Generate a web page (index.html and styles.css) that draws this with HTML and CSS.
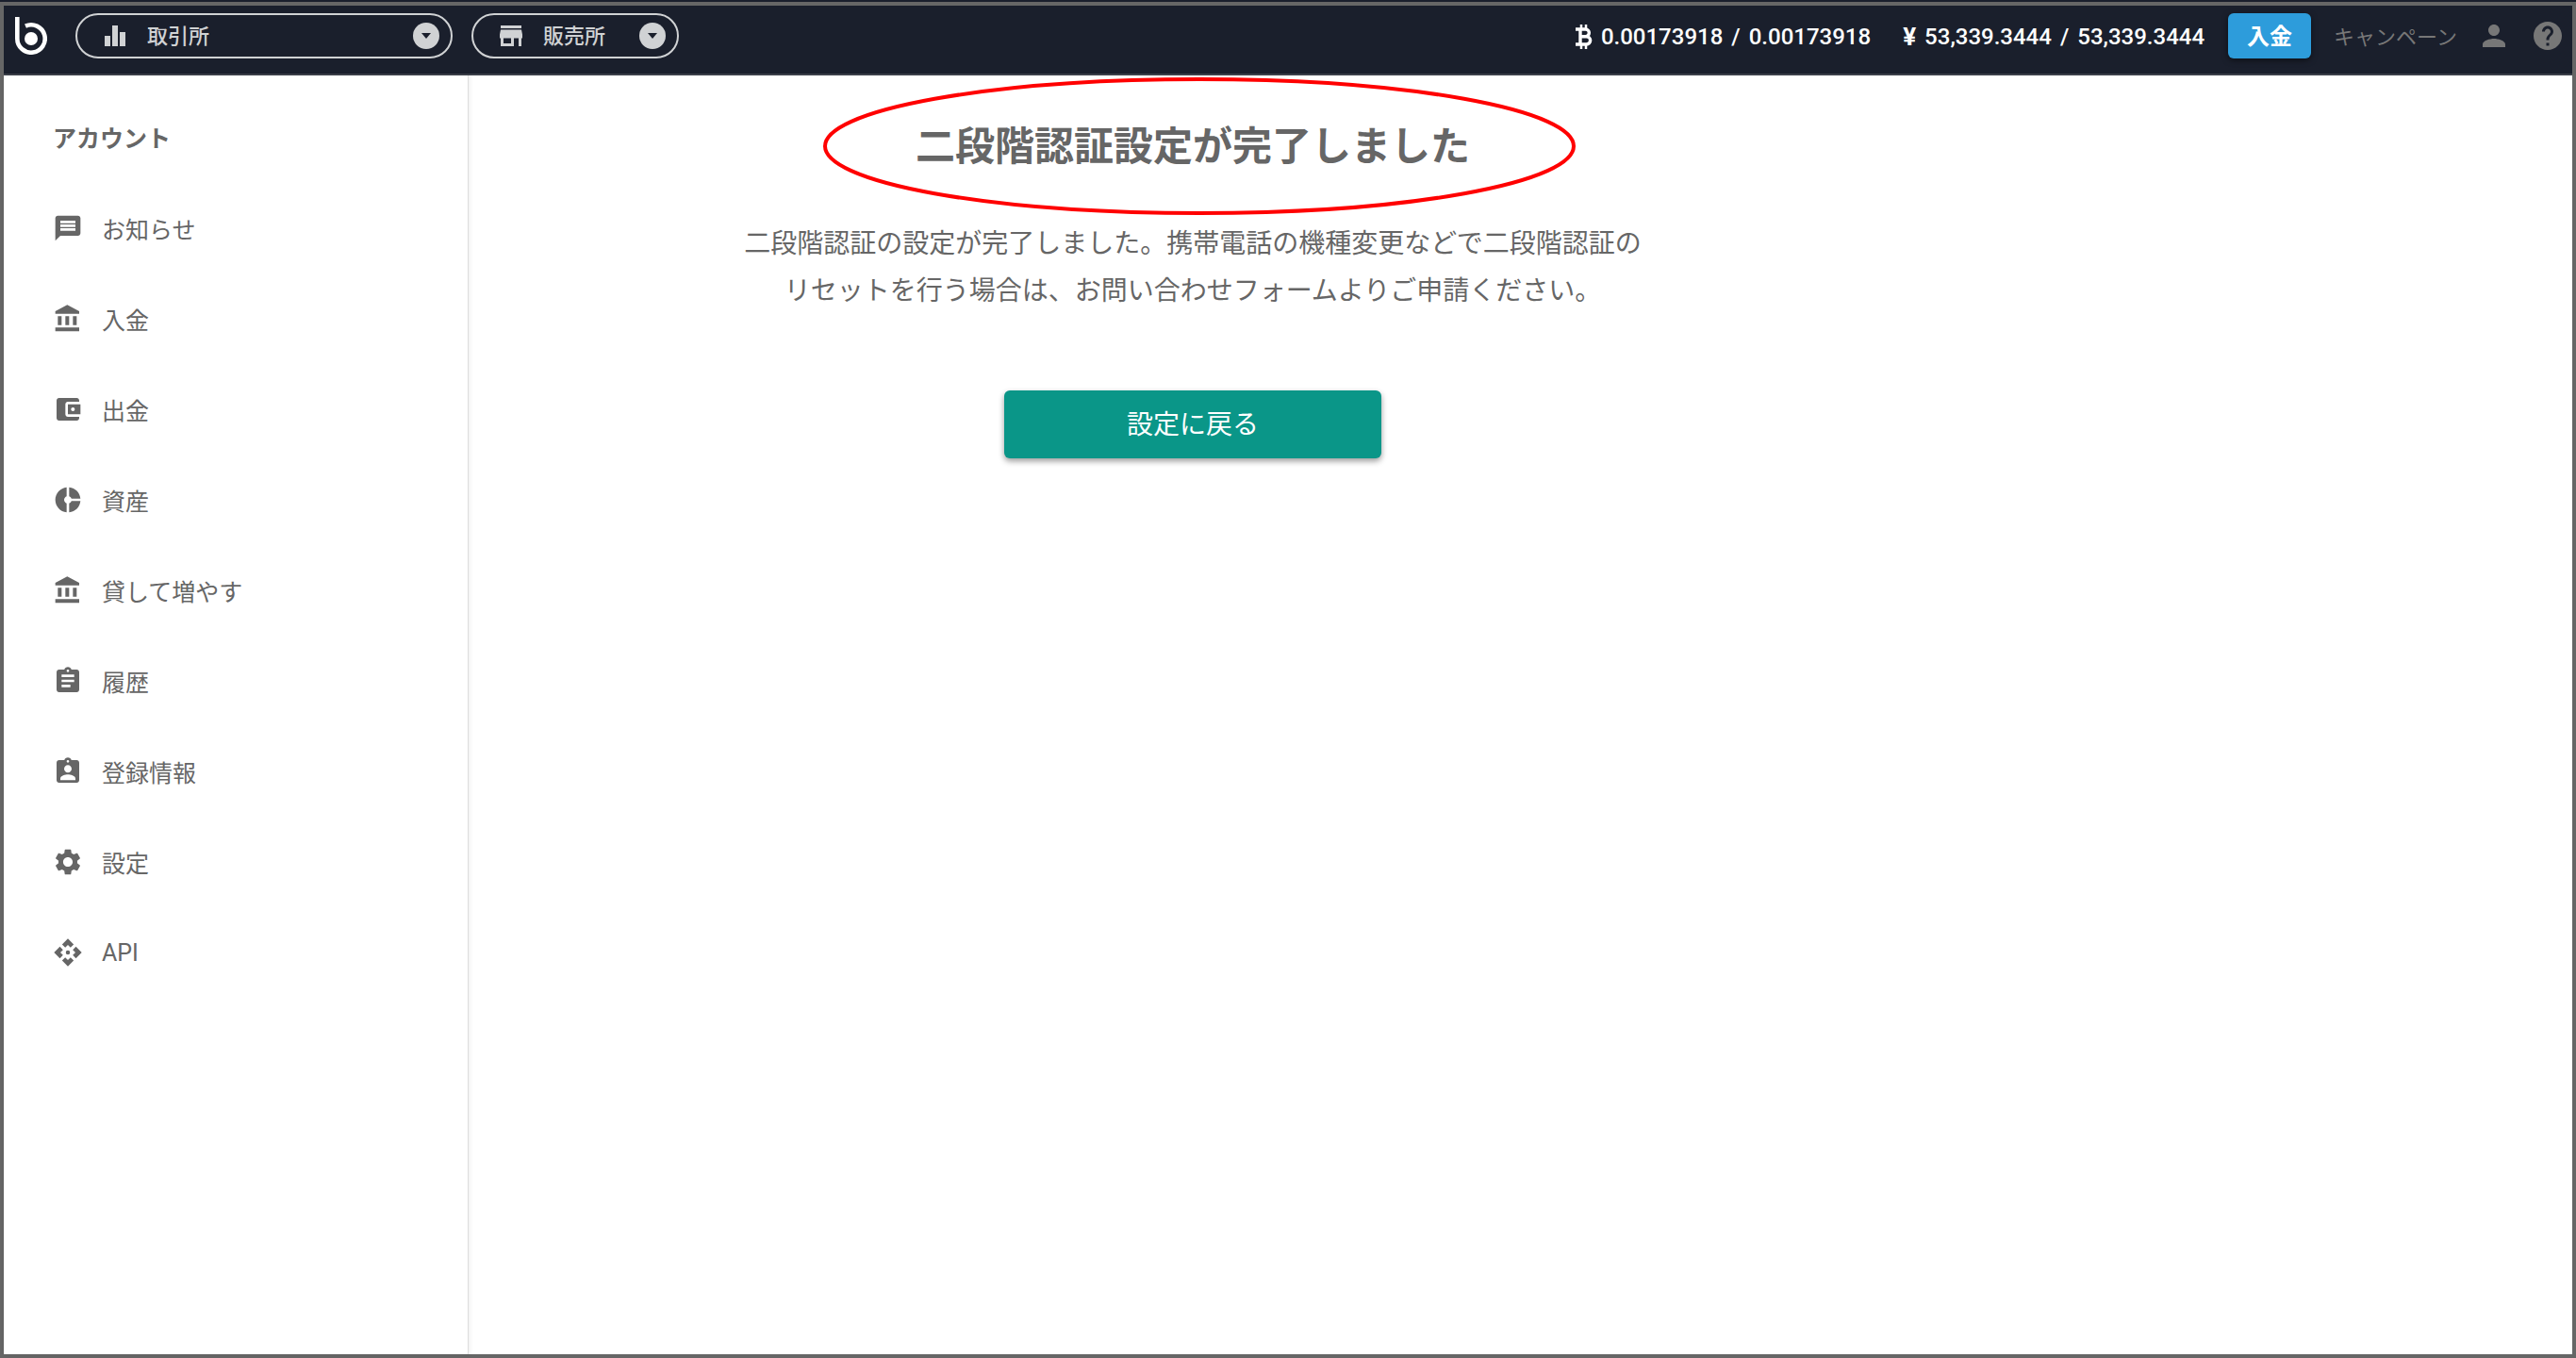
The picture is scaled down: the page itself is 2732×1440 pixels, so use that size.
FILE: index.html
```
<!DOCTYPE html>
<html lang="ja">
<head>
    <meta charset="UTF-8">
    <meta name="viewport" content="width=device-width, initial-scale=1.0">
    <title>二段階認証設定</title>
    <link rel="stylesheet" href="styles.css">
</head>
<body>
    <div class="window">
        <header class="header">
            <a href="#" class="logo" aria-label="ホーム">
                <svg viewBox="0 0 34 40" width="34" height="40" fill="none">
                    <path d="M2.3 0V23A14.7 14.7 0 1 0 11 9.6" stroke="#fff" stroke-width="4.6"/>
                    <circle cx="17" cy="23" r="7" fill="#fff"/>
                </svg>
            </a>
            <label class="pill pill-wide">
                <svg class="pill-icon" viewBox="0 0 24 24"><path d="M1 12h6v11H1zM9 1h6v22H9zM17 8h6v15h-6z"/></svg>
                <select aria-label="取引所">
                    <option>取引所</option>
                </select>
                <svg class="pill-arrow" viewBox="0 0 28 28"><circle cx="14" cy="14" r="14"/><path d="M9 11h10l-5 6z" fill="#1a1f2c"/></svg>
            </label>
            <label class="pill">
                <svg class="pill-icon" viewBox="0 0 24 24"><path d="M1 1h22v3H1zM1 5.500h22l1 5v4h-1V23h-3v-8.500h-5V23H1v-8.500H0v-4zM4 14.500V20h8v-5.500z" fill-rule="evenodd"/></svg>
                <select aria-label="販売所">
                    <option>販売所</option>
                </select>
                <svg class="pill-arrow" viewBox="0 0 28 28"><circle cx="14" cy="14" r="14"/><path d="M9 11h10l-5 6z" fill="#1a1f2c"/></svg>
            </label>

            <div class="balances">
                <div class="balance">
                    <svg viewBox="0 0 18 26" width="18" height="26" fill="none" stroke="#fff">
                        <path d="M6 0v5M11 0v5M6 21v5M11 21v5" stroke-width="2.500"/>
                        <path d="M0 5H10.500a3.700 3.700 0 0 1 0 7.700H5M10.500 12.700H11.500a4.100 4.100 0 0 1 0 8.300H0M5 5V21" stroke-width="3.400"/>
                    </svg>
                    <span>0.00173918</span><span>/</span><span>0.00173918</span>
                </div>
                <div class="balance">
                    <span class="yen">¥</span>
                    <span>53,339.3444</span><span>/</span><span>53,339.3444</span>
                </div>
            </div>
            <button class="deposit">入金</button>
            <nav class="header-links">
                <a href="#" class="campaign">キャンペーン</a>
                <a href="#" aria-label="アカウント">
                    <svg class="link-icon" viewBox="0 0 24 24"><path d="M12 12c2.210 0 4-1.790 4-4s-1.790-4-4-4-4 1.790-4 4 1.790 4 4 4zm0 2c-2.670 0-8 1.340-8 4v2h16v-2c0-2.660-5.330-4-8-4z"/></svg>
                </a>
                <a href="#" aria-label="ヘルプ">
                    <svg class="link-icon" viewBox="0 0 24 24"><path d="M12 2C6.480 2 2 6.480 2 12s4.480 10 10 10 10-4.480 10-10S17.520 2 12 2zm1 17h-2v-2h2v2zm2.070-7.750l-.9.920C13.450 12.900 13 13.500 13 15h-2v-.5c0-1.100.45-2.100 1.170-2.830l1.240-1.260c.37-.36.59-.86.59-1.410 0-1.100-.9-2-2-2s-2 .9-2 2H8c0-2.210 1.790-4 4-4s4 1.790 4 4c0 .88-.36 1.680-.93 2.250z"/></svg>
                </a>
            </nav>
        </header>

        <div class="page">
            <aside class="sidebar">
                <h2>アカウント</h2>
                <nav>
                    <a href="#">
                        <svg viewBox="0 0 24 24"><path d="M20 2H4c-1.100 0-1.990.9-1.990 2L2 22l4-4h14c1.100 0 2-.9 2-2V4c0-1.100-.9-2-2-2zM6 9h12v2H6V9zm12 5H6v-2h12v2zm0-6H6V6h12v2z"/></svg>
                        お知らせ
                    </a>
                    <a href="#">
                        <svg viewBox="0 0 24 24"><path d="M4 10v7h3v-7H4zm6 0v7h3v-7h-3zM2 22h19v-3H2v3zm14-12v7h3v-7h-3zm-4.500-9L2 6v2h19V6l-9.500-5z"/></svg>
                        入金
                    </a>
                    <a href="#">
                        <svg viewBox="0 0 24 24"><path d="M21 18v1c0 1.100-.9 2-2 2H5c-1.110 0-2-.9-2-2V5c0-1.100.89-2 2-2h14c1.100 0 2 .9 2 2v1h-9c-1.110 0-2 .9-2 2v8c0 1.100.89 2 2 2h9zm-9-2h10V8H12v8zm4-2.500c-.83 0-1.500-.67-1.500-1.500s.67-1.500 1.500-1.500 1.500.67 1.500 1.500-.67 1.500-1.500 1.500z"/></svg>
                        出金
                    </a>
                    <a href="#">
                        <svg viewBox="0 0 24 24"><path d="M11 9.160V2c-5 .5-9 4.790-9 10s4 9.500 9 10v-7.160c-1-.41-2-1.520-2-2.840s1-2.430 2-2.840zM14.860 11H22c-.48-4.750-4-8.530-9-9v7.160c1 .3 1.520.98 1.860 1.840zM13 14.840V22c5-.47 8.520-4.250 9-9h-7.140c-.34.860-.86 1.540-1.860 1.840z"/></svg>
                        資産
                    </a>
                    <a href="#">
                        <svg viewBox="0 0 24 24"><path d="M4 10v7h3v-7H4zm6 0v7h3v-7h-3zM2 22h19v-3H2v3zm14-12v7h3v-7h-3zm-4.500-9L2 6v2h19V6l-9.500-5z"/></svg>
                        貸して増やす
                    </a>
                    <a href="#">
                        <svg viewBox="0 0 24 24"><path d="M19 3h-4.180C14.400 1.840 13.300 1 12 1c-1.300 0-2.400.84-2.820 2H5c-1.100 0-2 .9-2 2v14c0 1.100.9 2 2 2h14c1.100 0 2-.9 2-2V5c0-1.100-.9-2-2-2zm-7 0c.55 0 1 .45 1 1s-.45 1-1 1-1-.45-1-1 .45-1 1-1zm2 14H7v-2h7v2zm3-4H7v-2h10v2zm0-4H7V7h10v2z"/></svg>
                        履歴
                    </a>
                    <a href="#">
                        <svg viewBox="0 0 24 24"><path d="M19 3h-4.180C14.400 1.840 13.300 1 12 1c-1.300 0-2.400.84-2.820 2H5c-1.100 0-2 .9-2 2v14c0 1.100.9 2 2 2h14c1.100 0 2-.9 2-2V5c0-1.100-.9-2-2-2zm-7 0c.55 0 1 .45 1 1s-.45 1-1 1-1-.45-1-1 .45-1 1-1zm0 4c1.660 0 3 1.340 3 3s-1.340 3-3 3-3-1.340-3-3 1.340-3 3-3zm6 12H6v-1.400c0-2 4-3.100 6-3.100s6 1.100 6 3.100V19z"/></svg>
                        登録情報
                    </a>
                    <a href="#">
                        <svg viewBox="0 0 24 24"><path d="M19.430 12.980c.04-.32.07-.64.07-.98s-.03-.66-.07-.98l2.110-1.650c.19-.15.24-.42.12-.64l-2-3.460c-.12-.22-.39-.3-.61-.22l-2.490 1c-.52-.4-1.080-.73-1.690-.98l-.38-2.650C14.460 2.180 14.250 2 14 2h-4c-.25 0-.46.18-.49.42l-.38 2.650c-.61.25-1.170.59-1.690.98l-2.490-1c-.23-.09-.49 0-.61.22l-2 3.460c-.13.22-.07.49.12.64l2.110 1.650c-.04.32-.07.65-.07.98s.03.66.07.98l-2.110 1.650c-.19.15-.24.42-.12.64l2 3.460c.12.22.39.3.61.22l2.490-1c.52.4 1.080.73 1.690.98l.38 2.650c.03.24.24.42.49.42h4c.25 0 .46-.18.49-.42l.38-2.650c.61-.25 1.170-.59 1.690-.98l2.490 1c.23.09.49 0 .61-.22l2-3.460c.12-.22.07-.49-.12-.64l-2.110-1.650zM12 15.800c-2.100 0-3.800-1.700-3.800-3.800s1.700-3.800 3.800-3.800 3.800 1.700 3.800 3.800-1.700 3.800-3.800 3.800z"/></svg>
                        設定
                    </a>
                    <a href="#">
                        <svg viewBox="0 0 24 24"><circle cx="12" cy="12" r="1.700"/><path d="M12 6l2.120 2.120 2.500-2.500L12 1 7.380 5.620l2.500 2.500zM6 12l2.120-2.120-2.500-2.500L1 12l4.620 4.620 2.500-2.500zM18 12l-2.120 2.120 2.500 2.500L23 12l-4.620-4.620-2.500 2.500zM12 18l-2.120-2.120-2.500 2.500L12 23l4.620-4.620-2.500-2.500z"/></svg>
                        API
                    </a>
                </nav>
            </aside>

            <main class="main">
                <div class="content">
                    <h1>
                        二段階認証設定が完了しました
                        <svg class="ellipse" viewBox="0 0 800 148"><ellipse cx="400" cy="74" rx="397" ry="71"/></svg>
                    </h1>
                    <p>二段階認証の設定が完了しました。携帯電話の機種変更などで二段階認証の<br>リセットを行う場合は、お問い合わせフォームよりご申請ください。</p>
                    <button class="back">設定に戻る</button>
                </div>
            </main>
        </div>
    </div>
</body>
</html>
```
FILE: styles.css
```
* {
    box-sizing: border-box;
}

body {
    margin: 0;
    padding-top: 2px;
    min-height: 100vh;
    display: flex;
    background-color: #1a1f2c;
    color: #666;
    font-family: Roboto, 'Noto Sans CJK JP', sans-serif;
}

a {
    color: inherit;
    text-decoration: none;
}

button {
    border: none;
    padding: 0 0 4px;
    color: #fff;
    font-family: inherit;
    cursor: pointer;
}

svg {
    display: block;
    flex-shrink: 0;
}

.window {
    flex: 1;
    display: flex;
    flex-direction: column;
    border: 4px solid #666;
    background-color: #fff;
}

/* Header */
.header {
    display: flex;
    align-items: center;
    padding: 8px 8px 16px 12px;
    background-color: #1a1f2c;
    border-bottom: 2px solid #3b3f49;
}

.logo {
    margin-right: 30px;
}

.pill {
    display: flex;
    align-items: center;
    width: 220px;
    height: 48px;
    margin-right: 20px;
    padding: 0 12px 0 28px;
    border: 2px solid #d0d2d4;
    border-radius: 24px;
}

.pill-wide {
    width: 400px;
}

.pill select {
    flex: 1;
    min-width: 0;
    margin-left: 22px;
    padding: 0;
    appearance: none;
    border: none;
    background: none;
    color: #d0d2d4;
    font-family: inherit;
    font-size: 22px;
    font-weight: 500;
}

.pill-icon {
    width: 24px;
    height: 24px;
    fill: #d0d2d4;
}

.pill-arrow {
    width: 28px;
    height: 28px;
    fill: #d0d2d4;
}

.balances {
    display: flex;
    gap: 34px;
    margin-left: auto;
    margin-right: 25px;
}

.balance {
    display: flex;
    align-items: center;
    gap: 9px;
    padding-top: 2px;
    color: #fff;
    font-size: 24px;
    font-weight: 500;
}

.yen {
    font-size: 26px;
    font-weight: 700;
}

.deposit {
    width: 88px;
    height: 48px;
    margin-right: 24px;
    border-radius: 6px;
    background-color: #2d9cdb;
    box-shadow: 0 2px 6px rgba(0, 0, 0, 0.5);
    font-size: 24px;
    font-weight: 700;
}

.header-links {
    display: flex;
    align-items: center;
    gap: 21px;
    color: #777;
}

.campaign {
    padding-bottom: 2px;
    font-size: 22px;
}

.link-icon {
    width: 36px;
    height: 36px;
    fill: #777;
}

/* Page body */
.page {
    flex: 1;
    display: flex;
}

.sidebar {
    width: 493px;
    padding: 22px 0 0 52px;
    border-right: 1px solid #ddd;
    box-shadow: 1px 0 5px rgba(0, 0, 0, 0.08);
}

.sidebar h2 {
    margin: 0;
    font-size: 25px;
    font-weight: 700;
    line-height: 92px;
}

.sidebar a {
    display: flex;
    align-items: center;
    gap: 20px;
    height: 96px;
    font-size: 25px;
    font-weight: 400;
}

.sidebar svg {
    width: 32px;
    height: 32px;
    fill: #666;
}

.main {
    flex: 1;
}

.content {
    max-width: 1536px;
    padding-top: 46px;
    text-align: center;
}

.content h1 {
    position: relative;
    margin: 0 0 48px;
    font-size: 42px;
    font-weight: 700;
    line-height: 60px;
}

/* Red marker drawn round the heading */
.ellipse {
    position: absolute;
    top: -45px;
    left: calc(50% - 393px);
    width: 800px;
    height: 148px;
    fill: none;
    stroke: #f00;
    stroke-width: 4px;
}

.content p {
    margin: 0 0 80px;
    font-size: 28px;
    font-weight: 400;
    line-height: 50px;
}

.back {
    width: 400px;
    height: 72px;
    border-radius: 6px;
    background-color: #0a9688;
    box-shadow: 0 3px 6px rgba(0, 0, 0, 0.4);
    font-size: 28px;
    font-weight: 400;
}
```
